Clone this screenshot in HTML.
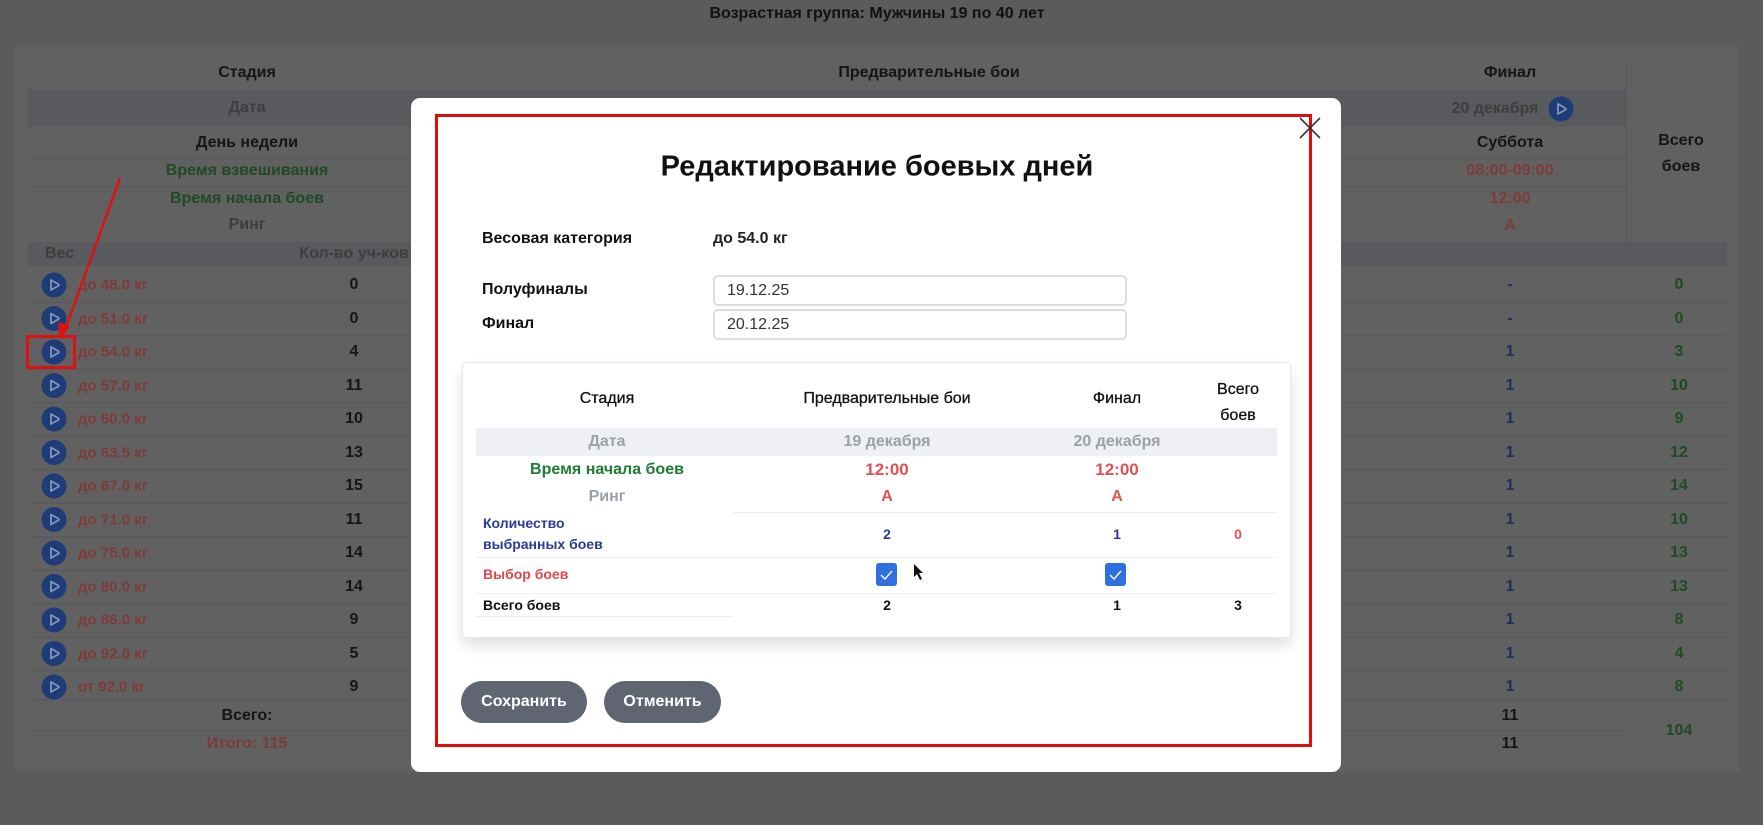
<!DOCTYPE html>
<html><head><meta charset="utf-8"><style>
*{box-sizing:border-box;margin:0;padding:0}
html,body{width:1763px;height:825px;overflow:hidden;background:#5b5b5b}
body{font-family:"Liberation Sans",sans-serif;position:relative}
.a{position:absolute;white-space:nowrap}
.c{transform:translateX(-50%)}
.m{transform:translate(-50%,-50%)}
.v{transform:translateY(-50%)}
.bg{font-size:16px;font-weight:bold}
.mt{font-size:16px;font-weight:bold}
</style></head><body>
<svg class="a" style="left:0;top:0" width="1763" height="825">
<rect x="0" y="0" width="1763" height="825" fill="#5b5b5b"/>
<rect x="15" y="47" width="1724" height="725" fill="#616161"/>
<rect x="28" y="89" width="1598" height="38" fill="#585a5d"/>
<rect x="28" y="242" width="1699" height="24" fill="#585a5d"/>
<rect x="1626" y="64" width="1" height="178" fill="#585858"/>
<rect x="28" y="158" width="1598" height="1" fill="#585858"/>
<rect x="28" y="186" width="1598" height="1" fill="#585858"/>
<rect x="28" y="699" width="1699" height="1" fill="#585858"/>
<rect x="28" y="730" width="1599" height="1" fill="#585858"/>
<g id="ics"></g>
</svg>
<div class="a c bg" style="left:877px;top:5px;color:#111">Возрастная группа: Мужчины 19 по 40 лет</div>
<div class="a m bg" style="left:247px;top:73px;color:#151515">Стадия</div>
<div class="a m bg" style="left:929px;top:73px;color:#151515">Предварительные бои</div>
<div class="a m bg" style="left:1510px;top:73px;color:#151515">Финал</div>
<div class="a m bg" style="left:247px;top:108px;color:#3e3e3e">Дата</div>
<div class="a m bg" style="left:1495px;top:109px;color:#3e3e3e">20 декабря</div>
<div class="a m bg" style="left:247px;top:143px;color:#151515">День недели</div>
<div class="a m bg" style="left:1510px;top:143px;color:#151515">Суббота</div>
<div class="a m bg" style="left:247px;top:171px;color:#1e4a26">Время взвешивания</div>
<div class="a m bg" style="left:1510px;top:171px;color:#7f3a3a">08:00-09:00</div>
<div class="a m bg" style="left:247px;top:199px;color:#1e4a26">Время начала боев</div>
<div class="a m bg" style="left:1510px;top:199px;color:#7f3a3a">12:00</div>
<div class="a m bg" style="left:247px;top:225px;color:#3e3e3e">Ринг</div>
<div class="a m bg" style="left:1510px;top:226px;color:#7f3a3a">A</div>
<div class="a c bg" style="left:1681px;top:128px;color:#151515;text-align:center;line-height:26px">Всего<br>боев</div>
<div class="a v bg" style="left:45px;top:254px;color:#3e3e3e">Вес</div>
<div class="a m bg" style="left:354px;top:254px;color:#3e3e3e">Кол-во уч-ков</div>
<div id="rows"></div>
<div class="a m bg" style="left:247px;top:716px;color:#151515">Всего:</div>
<div class="a m bg" style="left:247px;top:744px;color:#7f3a3a">Итого: 115</div>
<div class="a m bg" style="left:1510px;top:716px;color:#151515">11</div>
<div class="a m bg" style="left:1510px;top:744px;color:#151515">11</div>
<div class="a m bg" style="left:1679px;top:731px;color:#1e4a26">104</div>
<script>
var d=[["до 48.0 кг",0,"-",0],["до 51.0 кг",0,"-",0],["до 54.0 кг",4,1,3],["до 57.0 кг",11,1,10],["до 60.0 кг",10,1,9],["до 63.5 кг",13,1,12],["до 67.0 кг",15,1,14],["до 71.0 кг",11,1,10],["до 75.0 кг",14,1,13],["до 80.0 кг",14,1,13],["до 86.0 кг",9,1,8],["до 92.0 кг",5,1,4],["от 92.0 кг",9,1,8]];
var h="",g="";
function ic(x,y){return '<circle cx="'+x+'" cy="'+y+'" r="12.5" fill="#1f3b78"/><path d="M'+(x-3)+' '+(y-5)+'L'+(x+4)+' '+(y-1)+'Q'+(x+6)+' '+y+' '+(x+4)+' '+(y+1)+'L'+(x-3)+' '+(y+5)+'Z" fill="none" stroke="#8595ba" stroke-width="1.8" stroke-linejoin="round"/>';}
g+=ic(1561,109);
d.forEach(function(r,i){var y=285+i*33.5;
g+=ic(54,y);
h+='<div class="a v bg" style="left:78px;top:'+y+'px;color:#7f3a3a;font-size:15px">'+r[0]+'</div><div class="a m bg" style="left:354px;top:'+y+'px;color:#151515">'+r[1]+'</div><div class="a m bg" style="left:1510px;top:'+y+'px;color:#1f2d5e">'+r[2]+'</div><div class="a m bg" style="left:1679px;top:'+y+'px;color:#1e4a26">'+r[3]+'</div>';
if(i<12)g+='<rect x="28" y="'+(y+16.7)+'" width="1699" height="1" fill="#585858"/>';});
document.getElementById("rows").innerHTML=h;
document.getElementById("ics").innerHTML=g;
</script>
<svg class="a" style="left:0;top:0" width="1763" height="825"><line x1="120" y1="178" x2="65" y2="330" stroke="#e01010" stroke-width="2.5"/><polygon points="60,340 58,322 70,326" fill="#e01010"/><rect x="27.5" y="336.5" width="47" height="31" fill="none" stroke="#e01010" stroke-width="3"/></svg>

<div class="a" style="left:411px;top:98px;width:930px;height:674px;background:#fff;border-radius:9px"></div>
<div class="a" style="left:435px;top:114px;width:877px;height:633px;border:3px solid #e00d0d"></div>
<svg class="a" style="left:1299px;top:117px" width="22" height="22"><path d="M1 1L21 21M21 1L1 21" stroke="#333" stroke-width="1.6"/></svg>
<div class="a m" style="left:877px;top:167px;font-size:29px;font-weight:bold;color:#111">Редактирование боевых дней</div>
<div class="a v mt" style="left:482px;top:239px;color:#111">Весовая категория</div>
<div class="a v mt" style="left:713px;top:239px;color:#222">до 54.0 кг</div>
<div class="a v mt" style="left:482px;top:290px;color:#111">Полуфиналы</div>
<div class="a v mt" style="left:482px;top:324px;color:#111">Финал</div>
<div class="a" style="left:713px;top:275px;width:414px;height:31px;border:2px solid #dcdde0;border-radius:5px;font-size:16px;padding:5px 12px;color:#333">19.12.25</div>
<div class="a" style="left:713px;top:309px;width:414px;height:31px;border:2px solid #dcdde0;border-radius:5px;font-size:16px;padding:5px 12px;color:#333">20.12.25</div>
<div class="a" style="left:462px;top:362px;width:829px;height:276px;border:1px solid #e8e8e8;border-radius:3px;box-shadow:0 8px 14px rgba(0,0,0,.12)"></div>
<div class="a" style="left:476px;top:428px;width:801px;height:28px;background:#eef0f3"></div>
<div class="a m mt" style="left:607px;top:399px;color:#111;font-weight:normal;-webkit-text-stroke:.3px #111">Стадия</div>
<div class="a m mt" style="left:887px;top:399px;color:#111;font-weight:normal;-webkit-text-stroke:.3px #111">Предварительные бои</div>
<div class="a m mt" style="left:1117px;top:399px;color:#111;font-weight:normal;-webkit-text-stroke:.3px #111">Финал</div>
<div class="a c mt" style="left:1238px;top:377px;color:#111;text-align:center;line-height:26px;font-weight:normal;-webkit-text-stroke:.3px #111">Всего<br>боев</div>
<div class="a m mt" style="left:607px;top:442px;color:#9ca1a8">Дата</div>
<div class="a m mt" style="left:887px;top:442px;color:#9ca1a8">19 декабря</div>
<div class="a m mt" style="left:1117px;top:442px;color:#9ca1a8">20 декабря</div>
<div class="a m mt" style="left:607px;top:470px;color:#1e7b34">Время начала боев</div>
<div class="a m mt" style="left:887px;top:470px;color:#e05252;font-size:17px">12:00</div>
<div class="a m mt" style="left:1117px;top:470px;color:#e05252;font-size:17px">12:00</div>
<div class="a m mt" style="left:607px;top:497px;color:#9ca1a8">Ринг</div>
<div class="a m mt" style="left:887px;top:497px;color:#e05252">A</div>
<div class="a m mt" style="left:1117px;top:497px;color:#e05252">A</div>
<div class="a" style="left:733px;top:512px;width:544px;height:1px;background:#eee"></div>
<div class="a v" style="left:483px;top:534px;font-size:14px;font-weight:bold;color:#2b3a94;line-height:21px">Количество<br>выбранных боев</div>
<div class="a m mt" style="left:887px;top:534px;color:#2b3a94;font-size:14px">2</div>
<div class="a m mt" style="left:1117px;top:534px;color:#2b3a94;font-size:14px">1</div>
<div class="a m mt" style="left:1238px;top:534px;color:#e05252;font-size:14px">0</div>
<div class="a" style="left:476px;top:557px;width:801px;height:1px;background:#eee"></div>
<div class="a v" style="left:483px;top:574px;font-size:14px;font-weight:bold;color:#d9484e">Выбор боев</div>
<div class="a" style="left:876px;top:563px;width:21px;height:23px;background:#2f6fe0;border-radius:3px"><svg width="21" height="23"><path d="M5 12l4 4 7-8" stroke="#fff" stroke-width="1.4" fill="none"/></svg></div>
<div class="a" style="left:1105px;top:563px;width:21px;height:23px;background:#2f6fe0;border-radius:3px"><svg width="21" height="23"><path d="M5 12l4 4 7-8" stroke="#fff" stroke-width="1.4" fill="none"/></svg></div>
<svg class="a" style="left:913px;top:563px" width="12" height="18"><path d="M1 1v13l3-3 3 6 2-1-3-6h4z" fill="#111"/></svg>
<div class="a" style="left:476px;top:593px;width:801px;height:1px;background:#eee"></div>
<div class="a v" style="left:483px;top:605px;font-size:14px;font-weight:bold;color:#111">Всего боев</div>
<div class="a m mt" style="left:887px;top:605px;color:#111;font-size:14px">2</div>
<div class="a m mt" style="left:1117px;top:605px;color:#111;font-size:14px">1</div>
<div class="a m mt" style="left:1238px;top:605px;color:#111;font-size:14px">3</div>
<div class="a" style="left:476px;top:616px;width:257px;height:1px;background:#eee"></div>
<div class="a" style="left:461px;top:681px;width:126px;height:42px;border-radius:21px;background:#5f6672;color:#fff;font-size:16px;font-weight:bold;text-align:center;line-height:42px">Сохранить</div>
<div class="a" style="left:604px;top:681px;width:117px;height:42px;border-radius:21px;background:#5f6672;color:#fff;font-size:16px;font-weight:bold;text-align:center;line-height:42px">Отменить</div>
</body></html>
